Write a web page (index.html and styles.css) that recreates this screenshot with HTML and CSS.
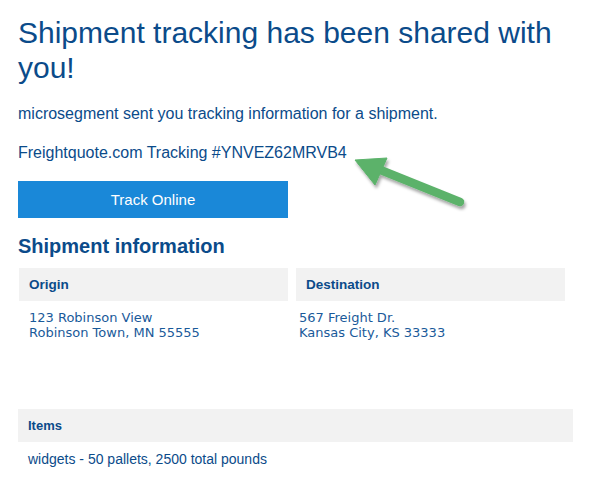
FILE: index.html
```html
<!DOCTYPE html>
<html>
<head>
<meta charset="utf-8">
<link rel="stylesheet" href="styles.css">
</head>
<body>
<div class="page">
  <h1 class="title">Shipment tracking has been shared with you!</h1>
  <p class="intro">microsegment sent you tracking information for a shipment.</p>
  <p class="tracking">Freightquote.com Tracking #YNVEZ62MRVB4</p>
  <a class="btn">Track Online</a>
  <h2 class="section">Shipment information</h2>
  <div class="addr-grid">
    <div class="addr-col">
      <div class="box-head">Origin</div>
      <div class="addr addr-first">123 Robinson View<br>Robinson Town, MN 55555</div>
    </div>
    <div class="addr-col">
      <div class="box-head">Destination</div>
      <div class="addr addr-second">567 Freight Dr.<br>Kansas City, KS 33333</div>
    </div>
  </div>
  <div class="items">
    <div class="box-head items-head">Items</div>
    <div class="items-text">widgets - 50 pallets, 2500 total pounds</div>
  </div>
  <svg class="arrow" width="140" height="80" viewBox="0 0 140 80">
    <defs>
      <filter id="sh" x="-20%" y="-20%" width="140%" height="150%">
        <feDropShadow dx="1.5" dy="3" stdDeviation="1.6" flood-color="#000" flood-opacity="0.35"/>
      </filter>
    </defs>
    <g filter="url(#sh)" fill="#5bb26a" stroke="#5bb26a">
      <line x1="38" y1="29" x2="120" y2="62" stroke-width="8.5" stroke-linecap="round"/>
      <polygon points="15,20 47,18 35,45" stroke-width="1" stroke-linejoin="round"/>
    </g>
  </svg>
</div>
</body>
</html>
```
FILE: styles.css
```css
* { box-sizing: border-box; }
html, body { margin: 0; padding: 0; background: #fff; }
body { font-family: "Liberation Sans", Arial, sans-serif; color: #0b4b8a; }
.page {
  position: relative;
  width: 573px;
  padding: 15px 0 0 18px;
}
.title {
  margin: 0;
  font-size: 30px;
  line-height: 35px;
  font-weight: normal;
  color: #0b4b8a;
}
.intro {
  margin: 18.5px 0 0;
  font-size: 16px;
  line-height: 20px;
}
.tracking {
  margin: 19px 0 0;
  font-size: 16px;
  line-height: 20px;
}
.btn {
  display: block;
  margin-top: 18.5px;
  width: 270px;
  height: 37px;
  background: #1a88d8;
  color: #fff;
  font-size: 15px;
  line-height: 37px;
  text-align: center;
}
.section {
  margin: 16px 0 0;
  font-size: 20px;
  line-height: 24px;
  font-weight: bold;
}
.addr-grid {
  margin-top: 10px;
  margin-left: 1px;
  display: grid;
  grid-template-columns: 269px 269px;
  column-gap: 8px;
}
.box-head {
  height: 33px;
  background: #f2f2f2;
  font-weight: bold;
  font-size: 13.5px;
  line-height: 33px;
  padding-left: 10px;
}
.addr {
  margin-top: 9.3px;
  font-family: "DejaVu Sans", Verdana, sans-serif;
  font-size: 13px;
  line-height: 15px;
  color: #1a5a9a;
}
.addr-first { padding-left: 10px; }
.addr-second { padding-left: 3px; }
.items {
  margin-top: 69px;
}
.items-head {
  font-size: 13px;
  padding-left: 10px;
}
.items-text {
  margin-top: 9px;
  padding-left: 10px;
  font-size: 14px;
  line-height: 16px;
}
.arrow {
  position: absolute;
  left: 340px;
  top: 140px;
}
```
